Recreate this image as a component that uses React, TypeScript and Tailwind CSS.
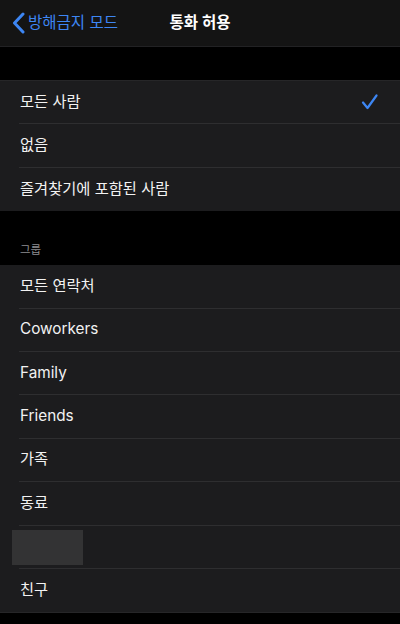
import React from "react"

const font = { fontFamily: 'Inter, "Noto Sans CJK KR", sans-serif' }

function Row({ label, checked, last, blank }: { label?: string; checked?: boolean; last?: boolean; blank?: boolean }) {
  return (
    <div className="h-[43.4px] flex flex-col">
      <div className="flex-1 flex items-center justify-between pl-5 pr-[22px]">
        {blank ? (
          <div className="w-[71px] h-[35px] bg-[#333334] -ml-2 mt-[2px]" />
        ) : (
          <span className="text-[15.3px] text-[#f2f2f2]">{label}</span>
        )}
        {checked && (
          <svg width="17" height="16" viewBox="0 0 17 16" fill="none">
            <path d="M2 8.5 L6.5 14 L15.5 1.5" stroke="#3d86f3" strokeWidth="2.2" strokeLinecap="round" strokeLinejoin="round" />
          </svg>
        )}
      </div>
      {!last && <div className="ml-[19px] h-px bg-[#2e2e30]" />}
    </div>
  )
}

export default function App() {
  const groups = ["모든 연락처", "Coworkers", "Family", "Friends", "가족", "동료", "", "친구"]
  return (
    <div className="w-[400px] h-[624px] bg-black overflow-hidden" style={font}>
      {/* nav bar */}
      <div className="relative h-[47px] bg-[#141414] border-b border-[#222224] flex items-center">
        <div className="flex items-center pl-[12px] text-[#3d86f3]">
          <svg width="13" height="22" viewBox="0 0 13 22" fill="none">
            <path d="M11 2 L2.5 11 L11 20" stroke="#3d86f3" strokeWidth="3" strokeLinecap="round" strokeLinejoin="round" />
          </svg>
          <span className="ml-[3px] text-[15.5px]">방해금지 모드</span>
        </div>
        <div className="absolute left-0 right-0 text-center text-[15.5px] font-semibold text-white pointer-events-none">
          통화 허용
        </div>
      </div>

      <div className="h-[33px]" />

      <div className="bg-[#1c1c1e] border-t border-[#262628]">
        <Row label="모든 사람" checked />
        <Row label="없음" />
        <Row label="즐겨찾기에 포함된 사람" last />
      </div>

      <div className="h-[54px] flex items-end pl-5 pb-[6px]">
        <span className="text-[11.5px] text-[#8c8c90]">그룹</span>
      </div>

      <div className="bg-[#1c1c1e] border-b border-[#262628]">
        {groups.map((g, i) => (
          <Row key={i} label={g} blank={g === ""} last={i === groups.length - 1} />
        ))}
      </div>
    </div>
  )
}
